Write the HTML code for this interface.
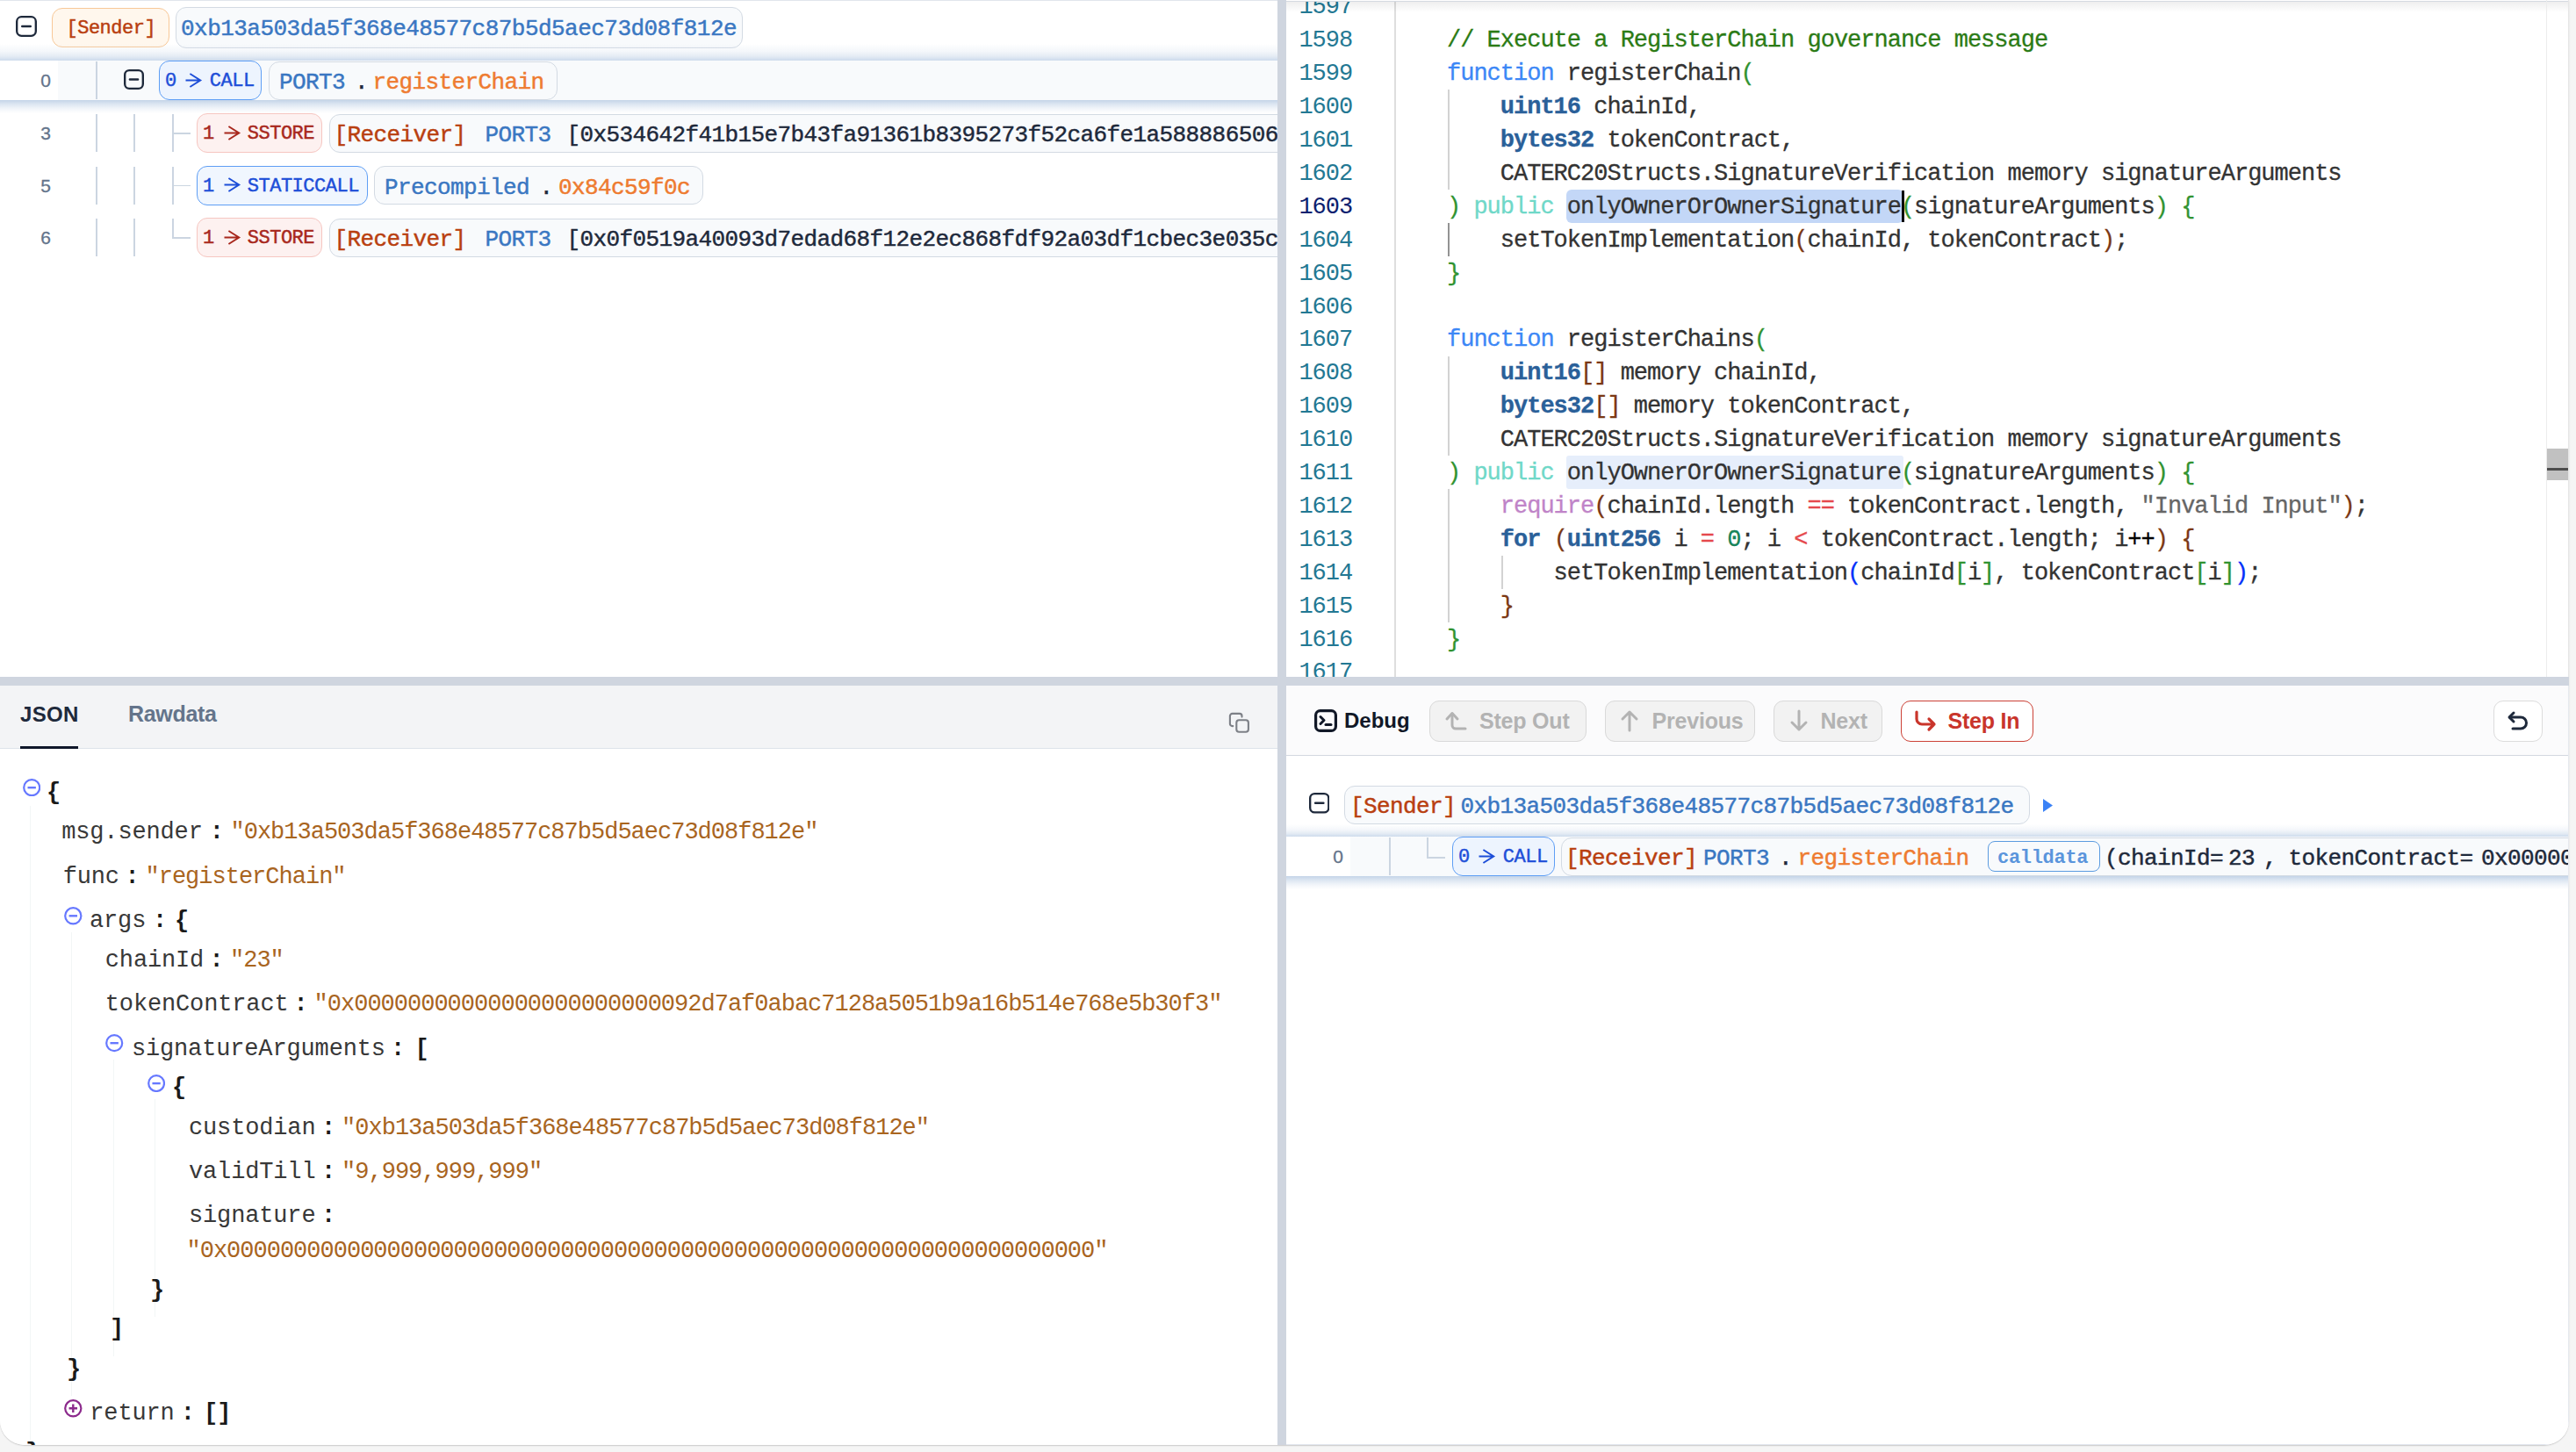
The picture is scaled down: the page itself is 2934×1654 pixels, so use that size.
<!DOCTYPE html><html><head><meta charset="utf-8"><style>
html,body{margin:0;padding:0}
body{width:2934px;height:1654px;background:#f5f5f5;position:relative;overflow:hidden}
.t{position:absolute;line-height:1;white-space:pre}
.m{font-family:"Liberation Mono",monospace}
.s{font-family:"Liberation Sans",sans-serif}
.b{position:absolute;box-sizing:border-box}
.clip{position:absolute;overflow:hidden}
</style></head><body>
<div class="clip" style="left:0;top:0;width:2926px;height:1646px;background:#fff;border-radius:0 0 28px 28px;box-shadow:0 1px 1.5px rgba(0,0,0,.18)">

<div class="clip" style="left:0;top:0;width:1455px;height:771px;background:#fff">
<div class="b" style="left:0.0px;top:0.0px;width:1455.0px;height:1.0px;background:#e1e5ec"></div>
<svg class="b" style="left:18px;top:18px" width="24" height="24" viewBox="0 0 24 24"><rect x="1.175" y="1.175" width="21.65" height="21.65" rx="5.28" fill="none" stroke="#1e293b" stroke-width="2.35"/><line x1="7.199999999999999" y1="12.0" x2="16.799999999999997" y2="12.0" stroke="#1e293b" stroke-width="2.35" stroke-linecap="round"/></svg>
<div class="b" style="left:59.0px;top:9.0px;width:134.0px;height:45.0px;background:#fff7ed;border:1.5px solid #f8c897;border-radius:12px"></div>
<div class="t m" style="left:75.5px;top:21.5px;font-size:22px;color:#b93f10;letter-spacing:-0.5px;-webkit-text-stroke:0.45px currentColor">[Sender]</div>
<div class="b" style="left:200.0px;top:8.0px;width:646.0px;height:47.0px;background:#f8fafc;border:1.5px solid #d3dae3;border-radius:12px"></div>
<div class="t m" style="left:206.0px;top:19.7px;font-size:26px;color:#3a77c2;letter-spacing:-0.53px;-webkit-text-stroke:0.45px currentColor">0xb13a503da5f368e48577c87b5d5aec73d08f812e</div>
<div class="b" style="left:0.0px;top:50.0px;width:1455.0px;height:19.0px;background:linear-gradient(to bottom,rgba(210,222,237,0) 0%,rgba(210,222,237,0.25) 45%,rgba(210,222,237,0.6) 75%,rgba(205,219,236,1) 100%)"></div>
<div class="b" style="left:66.0px;top:69.0px;width:1389.0px;height:45.0px;background:#f8fafc"></div>
<div class="t s" style="left:40.0px;top:81.2px;font-size:21px;color:#64748b;width:18px;text-align:right;-webkit-text-stroke:0.3px currentColor">0</div>
<div class="b" style="left:109.0px;top:70.0px;width:2.0px;height:43.0px;background:#cbd5e1"></div>
<svg class="b" style="left:141px;top:79px" width="23" height="23" viewBox="0 0 23 23"><rect x="1.175" y="1.175" width="20.65" height="20.65" rx="5.06" fill="none" stroke="#1e293b" stroke-width="2.35"/><line x1="6.8999999999999995" y1="11.5" x2="16.099999999999998" y2="11.5" stroke="#1e293b" stroke-width="2.35" stroke-linecap="round"/></svg>
<div class="b" style="left:181.0px;top:69.0px;width:117.0px;height:45.0px;background:#edf4fe;border:1.5px solid #5e9ef5;border-radius:12px"></div>
<div class="t m" style="left:188.0px;top:82.1px;font-size:22px;color:#1d4ed8;letter-spacing:-0.5px;-webkit-text-stroke:0.45px currentColor">0   CALL</div>
<svg class="b" style="left:211.0px;top:83.0px;overflow:visible" width="18" height="17" viewBox="0 0 18 17"><path d="M0.5 8.5 H17.2 M5.3999999999999995 1 L17.2 8.5 L5.3999999999999995 16" fill="none" stroke="#1d4ed8" stroke-width="2.0" stroke-linejoin="miter"/></svg>
<div class="b" style="left:305.5px;top:69.5px;width:329.5px;height:44.0px;background:#f8fafc;border:1.5px solid #d3dae3;border-radius:12px"></div>
<div class="t m" style="left:318.0px;top:81.1px;font-size:26px;color:#3a77c2;letter-spacing:-0.6px;-webkit-text-stroke:0.45px currentColor">PORT3</div>
<div class="t m" style="left:404.0px;top:81.1px;font-size:26px;color:#1e293b;letter-spacing:-0.6px;-webkit-text-stroke:0.45px currentColor">.</div>
<div class="t m" style="left:424.5px;top:81.1px;font-size:26px;color:#ee7b30;letter-spacing:-0.6px;-webkit-text-stroke:0.45px currentColor">registerChain</div>
<div class="b" style="left:0.0px;top:114.0px;width:1455.0px;height:15.0px;background:linear-gradient(to bottom,rgba(196,212,232,1) 0%,rgba(205,219,236,0.7) 30%,rgba(215,226,240,0.35) 65%,rgba(225,233,243,0) 100%)"></div>
<div class="t s" style="left:40.0px;top:141.2px;font-size:21px;color:#64748b;width:18px;text-align:right;-webkit-text-stroke:0.3px currentColor">3</div>
<div class="b" style="left:109.0px;top:130.0px;width:2.0px;height:43.0px;background:#cbd5e1"></div>
<div class="b" style="left:152.0px;top:130.0px;width:2.0px;height:43.0px;background:#cbd5e1"></div>
<div class="b" style="left:196.0px;top:130.0px;width:1.5px;height:43.0px;background:#cbd5e1"></div>
<div class="b" style="left:196.0px;top:151.0px;width:21.0px;height:1.5px;background:#cbd5e1"></div>
<div class="b" style="left:224.0px;top:129.0px;width:143.0px;height:45.0px;background:#fdf1f0;border:1.5px solid #f6c6c1;border-radius:12px"></div>
<div class="t m" style="left:231.0px;top:142.1px;font-size:22px;color:#a8281d;letter-spacing:-0.5px;-webkit-text-stroke:0.45px currentColor">1   SSTORE</div>
<svg class="b" style="left:254.5px;top:142.5px;overflow:visible" width="18" height="17" viewBox="0 0 18 17"><path d="M0.5 8.5 H17.2 M5.3999999999999995 1 L17.2 8.5 L5.3999999999999995 16" fill="none" stroke="#a8281d" stroke-width="2.0" stroke-linejoin="miter"/></svg>
<div class="b" style="left:375.0px;top:129.5px;width:1095.0px;height:44.0px;background:#f8fafc;border:1.5px solid #d3dae3;border-radius:12px"></div>
<div class="t m" style="left:380.5px;top:141.1px;font-size:26px;color:#b93f10;letter-spacing:-0.6px;-webkit-text-stroke:0.45px currentColor">[Receiver]</div>
<div class="t m" style="left:552.5px;top:141.1px;font-size:26px;color:#3a77c2;letter-spacing:-0.6px;-webkit-text-stroke:0.45px currentColor">PORT3</div>
<div class="t m" style="left:645.5px;top:141.1px;font-size:26px;color:#1e293b;letter-spacing:-0.6px;-webkit-text-stroke:0.45px currentColor">[0x534642f41b15e7b43fa91361b8395273f52ca6fe1a588886506e2f]</div>
<div class="t s" style="left:40.0px;top:200.7px;font-size:21px;color:#64748b;width:18px;text-align:right;-webkit-text-stroke:0.3px currentColor">5</div>
<div class="b" style="left:109.0px;top:189.5px;width:2.0px;height:43.0px;background:#cbd5e1"></div>
<div class="b" style="left:152.0px;top:189.5px;width:2.0px;height:43.0px;background:#cbd5e1"></div>
<div class="b" style="left:196.0px;top:189.5px;width:1.5px;height:43.0px;background:#cbd5e1"></div>
<div class="b" style="left:196.0px;top:210.5px;width:21.0px;height:1.5px;background:#cbd5e1"></div>
<div class="b" style="left:224.0px;top:188.5px;width:195.0px;height:45.0px;background:#f0f6fe;border:1.5px solid #5e9ef5;border-radius:12px"></div>
<div class="t m" style="left:231.0px;top:201.6px;font-size:22px;color:#1d4ed8;letter-spacing:-0.5px;-webkit-text-stroke:0.45px currentColor">1   STATICCALL</div>
<svg class="b" style="left:254.5px;top:202.0px;overflow:visible" width="18" height="17" viewBox="0 0 18 17"><path d="M0.5 8.5 H17.2 M5.3999999999999995 1 L17.2 8.5 L5.3999999999999995 16" fill="none" stroke="#1d4ed8" stroke-width="2.0" stroke-linejoin="miter"/></svg>
<div class="b" style="left:426.0px;top:189.0px;width:374.5px;height:44.0px;background:#f8fafc;border:1.5px solid #d3dae3;border-radius:12px"></div>
<div class="t m" style="left:438.0px;top:200.6px;font-size:26px;color:#3a77c2;letter-spacing:-0.6px;-webkit-text-stroke:0.45px currentColor">Precompiled</div>
<div class="t m" style="left:614.5px;top:200.6px;font-size:26px;color:#1e293b;letter-spacing:-0.6px;-webkit-text-stroke:0.45px currentColor">.</div>
<div class="t m" style="left:636.0px;top:200.6px;font-size:26px;color:#ee7b30;letter-spacing:-0.6px;-webkit-text-stroke:0.45px currentColor">0x84c59f0c</div>
<div class="t s" style="left:40.0px;top:260.2px;font-size:21px;color:#64748b;width:18px;text-align:right;-webkit-text-stroke:0.3px currentColor">6</div>
<div class="b" style="left:109.0px;top:249.0px;width:2.0px;height:43.0px;background:#cbd5e1"></div>
<div class="b" style="left:152.0px;top:249.0px;width:2.0px;height:43.0px;background:#cbd5e1"></div>
<div class="b" style="left:196.0px;top:249.0px;width:1.5px;height:22.0px;background:#cbd5e1"></div>
<div class="b" style="left:196.0px;top:270.0px;width:21.0px;height:1.5px;background:#cbd5e1"></div>
<div class="b" style="left:224.0px;top:248.0px;width:143.0px;height:45.0px;background:#fdf1f0;border:1.5px solid #f6c6c1;border-radius:12px"></div>
<div class="t m" style="left:231.0px;top:261.1px;font-size:22px;color:#a8281d;letter-spacing:-0.5px;-webkit-text-stroke:0.45px currentColor">1   SSTORE</div>
<svg class="b" style="left:254.5px;top:261.5px;overflow:visible" width="18" height="17" viewBox="0 0 18 17"><path d="M0.5 8.5 H17.2 M5.3999999999999995 1 L17.2 8.5 L5.3999999999999995 16" fill="none" stroke="#a8281d" stroke-width="2.0" stroke-linejoin="miter"/></svg>
<div class="b" style="left:375.0px;top:248.5px;width:1095.0px;height:44.0px;background:#f8fafc;border:1.5px solid #d3dae3;border-radius:12px"></div>
<div class="t m" style="left:380.5px;top:260.1px;font-size:26px;color:#b93f10;letter-spacing:-0.6px;-webkit-text-stroke:0.45px currentColor">[Receiver]</div>
<div class="t m" style="left:552.5px;top:260.1px;font-size:26px;color:#3a77c2;letter-spacing:-0.6px;-webkit-text-stroke:0.45px currentColor">PORT3</div>
<div class="t m" style="left:645.5px;top:260.1px;font-size:26px;color:#1e293b;letter-spacing:-0.6px;-webkit-text-stroke:0.45px currentColor">[0x0f0519a40093d7edad68f12e2ec868fdf92a03df1cbec3e035cd1e]</div>
</div>
<div class="clip" style="left:1465px;top:0;width:1461px;height:771px;background:#fff">
<div class="b" style="left:123.2px;top:0.0px;width:1.8px;height:771.0px;background:#dedede"></div>
<div class="b" style="left:319.3px;top:216.0px;width:383.5px;height:37.9px;background:#c3d7f7;border-radius:6px"></div>
<div class="b" style="left:701.3px;top:217.0px;width:2.5px;height:35.9px;background:#000"></div>
<div class="b" style="left:319.3px;top:519.2px;width:383.5px;height:37.9px;background:#e6eefb;border-radius:3px"></div>
<div class="b" style="left:184.4px;top:102.3px;width:1.8px;height:113.7px;background:#d3d3d3"></div>
<div class="b" style="left:184.4px;top:253.9px;width:1.8px;height:37.9px;background:#939393"></div>
<div class="b" style="left:184.4px;top:405.5px;width:1.8px;height:113.7px;background:#d3d3d3"></div>
<div class="b" style="left:184.4px;top:557.1px;width:1.8px;height:151.6px;background:#d3d3d3"></div>
<div class="b" style="left:245.2px;top:632.9px;width:1.8px;height:37.9px;background:#d3d3d3"></div>
<div class="t m" style="left:13.2px;top:-4.6px;font-size:27px;color:#237893;letter-spacing:-1.0px;width:62px;text-align:right">1597</div>
<div class="t m" style="left:13.2px;top:33.3px;font-size:27px;color:#237893;letter-spacing:-1.0px;width:62px;text-align:right">1598</div>
<div class="t m" style="left:122.2px;top:33.3px;font-size:27px;color:#333333;letter-spacing:-1.0px;-webkit-text-stroke:0.3px currentColor">    <span style="color:#2b7b15;">// Execute a RegisterChain governance message</span></div>
<div class="t m" style="left:13.2px;top:71.2px;font-size:27px;color:#237893;letter-spacing:-1.0px;width:62px;text-align:right">1599</div>
<div class="t m" style="left:122.2px;top:71.2px;font-size:27px;color:#333333;letter-spacing:-1.0px;-webkit-text-stroke:0.3px currentColor">    <span style="color:#3c87f6;">function</span> registerChain<span style="color:#319331;">(</span></div>
<div class="t m" style="left:13.2px;top:109.1px;font-size:27px;color:#237893;letter-spacing:-1.0px;width:62px;text-align:right">1600</div>
<div class="t m" style="left:122.2px;top:109.1px;font-size:27px;color:#333333;letter-spacing:-1.0px;-webkit-text-stroke:0.3px currentColor">        <span style="color:#2a6099;font-weight:700;">uint16</span> chainId,</div>
<div class="t m" style="left:13.2px;top:147.0px;font-size:27px;color:#237893;letter-spacing:-1.0px;width:62px;text-align:right">1601</div>
<div class="t m" style="left:122.2px;top:147.0px;font-size:27px;color:#333333;letter-spacing:-1.0px;-webkit-text-stroke:0.3px currentColor">        <span style="color:#2a6099;font-weight:700;">bytes32</span> tokenContract,</div>
<div class="t m" style="left:13.2px;top:184.9px;font-size:27px;color:#237893;letter-spacing:-1.0px;width:62px;text-align:right">1602</div>
<div class="t m" style="left:122.2px;top:184.9px;font-size:27px;color:#333333;letter-spacing:-1.0px;-webkit-text-stroke:0.3px currentColor">        CATERC20Structs.SignatureVerification memory signatureArguments</div>
<div class="t m" style="left:13.2px;top:222.8px;font-size:27px;color:#0b216f;letter-spacing:-1.0px;width:62px;text-align:right">1603</div>
<div class="t m" style="left:122.2px;top:222.8px;font-size:27px;color:#333333;letter-spacing:-1.0px;-webkit-text-stroke:0.3px currentColor">    <span style="color:#319331;">)</span> <span style="color:#6fd8c8;">public</span> onlyOwnerOrOwnerSignature<span style="color:#319331;">(</span>signatureArguments<span style="color:#319331;">)</span> <span style="color:#319331;">{</span></div>
<div class="t m" style="left:13.2px;top:260.7px;font-size:27px;color:#237893;letter-spacing:-1.0px;width:62px;text-align:right">1604</div>
<div class="t m" style="left:122.2px;top:260.7px;font-size:27px;color:#333333;letter-spacing:-1.0px;-webkit-text-stroke:0.3px currentColor">        setTokenImplementation<span style="color:#7b3814;">(</span>chainId, tokenContract<span style="color:#7b3814;">)</span>;</div>
<div class="t m" style="left:13.2px;top:298.6px;font-size:27px;color:#237893;letter-spacing:-1.0px;width:62px;text-align:right">1605</div>
<div class="t m" style="left:122.2px;top:298.6px;font-size:27px;color:#333333;letter-spacing:-1.0px;-webkit-text-stroke:0.3px currentColor">    <span style="color:#319331;">}</span></div>
<div class="t m" style="left:13.2px;top:336.5px;font-size:27px;color:#237893;letter-spacing:-1.0px;width:62px;text-align:right">1606</div>
<div class="t m" style="left:13.2px;top:374.4px;font-size:27px;color:#237893;letter-spacing:-1.0px;width:62px;text-align:right">1607</div>
<div class="t m" style="left:122.2px;top:374.4px;font-size:27px;color:#333333;letter-spacing:-1.0px;-webkit-text-stroke:0.3px currentColor">    <span style="color:#3c87f6;">function</span> registerChains<span style="color:#319331;">(</span></div>
<div class="t m" style="left:13.2px;top:412.3px;font-size:27px;color:#237893;letter-spacing:-1.0px;width:62px;text-align:right">1608</div>
<div class="t m" style="left:122.2px;top:412.3px;font-size:27px;color:#333333;letter-spacing:-1.0px;-webkit-text-stroke:0.3px currentColor">        <span style="color:#2a6099;font-weight:700;">uint16</span><span style="color:#7b3814;">[]</span> memory chainId,</div>
<div class="t m" style="left:13.2px;top:450.2px;font-size:27px;color:#237893;letter-spacing:-1.0px;width:62px;text-align:right">1609</div>
<div class="t m" style="left:122.2px;top:450.2px;font-size:27px;color:#333333;letter-spacing:-1.0px;-webkit-text-stroke:0.3px currentColor">        <span style="color:#2a6099;font-weight:700;">bytes32</span><span style="color:#7b3814;">[]</span> memory tokenContract,</div>
<div class="t m" style="left:13.2px;top:488.1px;font-size:27px;color:#237893;letter-spacing:-1.0px;width:62px;text-align:right">1610</div>
<div class="t m" style="left:122.2px;top:488.1px;font-size:27px;color:#333333;letter-spacing:-1.0px;-webkit-text-stroke:0.3px currentColor">        CATERC20Structs.SignatureVerification memory signatureArguments</div>
<div class="t m" style="left:13.2px;top:526.0px;font-size:27px;color:#237893;letter-spacing:-1.0px;width:62px;text-align:right">1611</div>
<div class="t m" style="left:122.2px;top:526.0px;font-size:27px;color:#333333;letter-spacing:-1.0px;-webkit-text-stroke:0.3px currentColor">    <span style="color:#319331;">)</span> <span style="color:#6fd8c8;">public</span> onlyOwnerOrOwnerSignature<span style="color:#319331;">(</span>signatureArguments<span style="color:#319331;">)</span> <span style="color:#319331;">{</span></div>
<div class="t m" style="left:13.2px;top:563.9px;font-size:27px;color:#237893;letter-spacing:-1.0px;width:62px;text-align:right">1612</div>
<div class="t m" style="left:122.2px;top:563.9px;font-size:27px;color:#333333;letter-spacing:-1.0px;-webkit-text-stroke:0.3px currentColor">        <span style="color:#c084c8;">require</span><span style="color:#7b3814;">(</span>chainId.length <span style="color:#e5484d;">==</span> tokenContract.length, <span style="color:#666666;">"Invalid Input"</span><span style="color:#7b3814;">)</span>;</div>
<div class="t m" style="left:13.2px;top:601.8px;font-size:27px;color:#237893;letter-spacing:-1.0px;width:62px;text-align:right">1613</div>
<div class="t m" style="left:122.2px;top:601.8px;font-size:27px;color:#333333;letter-spacing:-1.0px;-webkit-text-stroke:0.3px currentColor">        <span style="color:#2a6099;font-weight:700;">for</span> <span style="color:#7b3814;">(</span><span style="color:#2a6099;font-weight:700;">uint256</span> i <span style="color:#e5484d;">=</span> <span style="color:#17845a;">0</span>; i <span style="color:#e5484d;">&lt;</span> tokenContract.length; i<span style="color:#000000;">++</span><span style="color:#7b3814;">)</span> <span style="color:#7b3814;">{</span></div>
<div class="t m" style="left:13.2px;top:639.7px;font-size:27px;color:#237893;letter-spacing:-1.0px;width:62px;text-align:right">1614</div>
<div class="t m" style="left:122.2px;top:639.7px;font-size:27px;color:#333333;letter-spacing:-1.0px;-webkit-text-stroke:0.3px currentColor">            setTokenImplementation<span style="color:#0431fa;">(</span>chainId<span style="color:#319331;">[</span>i<span style="color:#319331;">]</span>, tokenContract<span style="color:#319331;">[</span>i<span style="color:#319331;">]</span><span style="color:#0431fa;">)</span>;</div>
<div class="t m" style="left:13.2px;top:677.6px;font-size:27px;color:#237893;letter-spacing:-1.0px;width:62px;text-align:right">1615</div>
<div class="t m" style="left:122.2px;top:677.6px;font-size:27px;color:#333333;letter-spacing:-1.0px;-webkit-text-stroke:0.3px currentColor">        <span style="color:#7b3814;">}</span></div>
<div class="t m" style="left:13.2px;top:715.5px;font-size:27px;color:#237893;letter-spacing:-1.0px;width:62px;text-align:right">1616</div>
<div class="t m" style="left:122.2px;top:715.5px;font-size:27px;color:#333333;letter-spacing:-1.0px;-webkit-text-stroke:0.3px currentColor">    <span style="color:#319331;">}</span></div>
<div class="t m" style="left:13.2px;top:753.4px;font-size:27px;color:#237893;letter-spacing:-1.0px;width:62px;text-align:right">1617</div>
<div class="b" style="left:0.0px;top:0.0px;width:1461.0px;height:1.0px;background:#ffffff"></div>
<div class="b" style="left:0.0px;top:1.0px;width:1461.0px;height:1.0px;background:#d4d9e1"></div>
<div class="b" style="left:0.0px;top:2.0px;width:1461.0px;height:12.0px;background:linear-gradient(to bottom,rgba(0,0,0,.065),rgba(0,0,0,0))"></div>
<div class="b" style="left:1435.0px;top:0.0px;width:1.0px;height:771.0px;background:#ececec"></div>
<div class="b" style="left:1435.5px;top:511.0px;width:24.5px;height:35.7px;background:#c1c1c1"></div>
<div class="b" style="left:1436.0px;top:533.0px;width:24.0px;height:3.0px;background:#4d4d4d"></div>
<div class="b" style="left:1460.0px;top:0.0px;width:1.0px;height:771.0px;background:#e6e6e6"></div>
</div>
<div class="b" style="left:0.0px;top:771.0px;width:2926.0px;height:10.0px;background:#cfd5df"></div>
<div class="b" style="left:1455.0px;top:0.0px;width:10.0px;height:1646.0px;background:#cfd5df"></div>
<div class="clip" style="left:0;top:781px;width:1455px;height:865px;background:#fff">
<div class="b" style="left:0.0px;top:0.0px;width:1455.0px;height:71.0px;background:#f3f4f6"></div>
<div class="b" style="left:0.0px;top:71.0px;width:1455.0px;height:1.0px;background:#dde3ea"></div>
<div class="t s" style="left:23.0px;top:21.1px;font-size:24px;color:#1e293b;font-weight:700;letter-spacing:0.3px">JSON</div>
<div class="t s" style="left:146.0px;top:20.2px;font-size:25px;color:#64748b;font-weight:700;letter-spacing:-0.3px">Rawdata</div>
<div class="b" style="left:23.0px;top:69.0px;width:66.0px;height:3.0px;background:#0f172a"></div>
<svg class="b" style="left:1398px;top:29px" width="27" height="27" viewBox="0 0 27 27"><rect x="10.3" y="10.2" width="13.6" height="13.6" rx="3" fill="none" stroke="#7d8087" stroke-width="2.1"/><path d="M6.3 17.1 H5.6 A2.7 2.7 0 0 1 2.9 14.4 V5.6 A2.7 2.7 0 0 1 5.6 2.9 H13.8 A2.7 2.7 0 0 1 16.5 5.6 V6.6" fill="none" stroke="#7d8087" stroke-width="2.1" stroke-linecap="round"/></svg>
<div class="b" style="left:34.0px;top:137.0px;width:1.2px;height:722.0px;background:#f2f6f6"></div>
<div class="b" style="left:81.0px;top:281.0px;width:1.2px;height:528.0px;background:#f2f6f6"></div>
<div class="b" style="left:128.5px;top:426.0px;width:1.2px;height:338.0px;background:#f2f6f6"></div>
<div class="b" style="left:175.5px;top:471.0px;width:1.2px;height:248.0px;background:#f2f6f6"></div>
<svg class="b" style="left:25.6px;top:106px" width="20.4" height="20.4" viewBox="0 0 20.4 20.4"><circle cx="10.2" cy="10.2" r="9.0" fill="none" stroke="#6678ff" stroke-width="2.2"/><line x1="5.508" y1="10.2" x2="14.892" y2="10.2" stroke="#6678ff" stroke-width="2.4"/></svg>
<div class="t m" style="left:53.0px;top:109.3px;font-size:27px;color:#1a1a1a;font-weight:700;letter-spacing:-1.0px">{</div>
<div class="t m" style="left:70.2px;top:154.3px;font-size:27px;color:#383838;letter-spacing:-0.15px">msg.sender</div>
<div class="t m" style="left:238.8px;top:154.3px;font-size:27px;color:#1a1a1a;font-weight:700;letter-spacing:-1.0px">:</div>
<div class="t m" style="left:262.5px;top:154.3px;font-size:27px;color:#a9651f;letter-spacing:-1.0px">"0xb13a503da5f368e48577c87b5d5aec73d08f812e"</div>
<div class="t m" style="left:71.7px;top:205.2px;font-size:27px;color:#383838;letter-spacing:-0.15px">func</div>
<div class="t m" style="left:142.5px;top:205.2px;font-size:27px;color:#1a1a1a;font-weight:700;letter-spacing:-1.0px">:</div>
<div class="t m" style="left:165.5px;top:205.2px;font-size:27px;color:#a9651f;letter-spacing:-1.0px">"registerChain"</div>
<svg class="b" style="left:73.3px;top:252.4000000000001px" width="20.6" height="20.6" viewBox="0 0 20.6 20.6"><circle cx="10.3" cy="10.3" r="9.100000000000001" fill="none" stroke="#6678ff" stroke-width="2.2"/><line x1="5.562000000000001" y1="10.3" x2="15.038" y2="10.3" stroke="#6678ff" stroke-width="2.4"/></svg>
<div class="t m" style="left:102.0px;top:254.9px;font-size:27px;color:#383838;letter-spacing:-0.15px">args</div>
<div class="t m" style="left:173.9px;top:254.9px;font-size:27px;color:#1a1a1a;font-weight:700;letter-spacing:-1.0px">:</div>
<div class="t m" style="left:199.0px;top:254.9px;font-size:27px;color:#1a1a1a;font-weight:700;letter-spacing:-1.0px">{</div>
<div class="t m" style="left:119.8px;top:300.1px;font-size:27px;color:#383838;letter-spacing:-0.15px">chainId</div>
<div class="t m" style="left:238.5px;top:300.1px;font-size:27px;color:#1a1a1a;font-weight:700;letter-spacing:-1.0px">:</div>
<div class="t m" style="left:262.0px;top:300.1px;font-size:27px;color:#a9651f;letter-spacing:-1.0px">"23"</div>
<div class="t m" style="left:119.8px;top:349.6px;font-size:27px;color:#383838;letter-spacing:-0.15px">tokenContract</div>
<div class="t m" style="left:334.5px;top:349.6px;font-size:27px;color:#1a1a1a;font-weight:700;letter-spacing:-1.0px">:</div>
<div class="t m" style="left:357.6px;top:349.6px;font-size:27px;color:#a9651f;letter-spacing:-1.0px">"0x00000000000000000000000092d7af0abac7128a5051b9a16b514e768e5b30f3"</div>
<svg class="b" style="left:120.3px;top:397.4000000000001px" width="20.4" height="20.4" viewBox="0 0 20.4 20.4"><circle cx="10.2" cy="10.2" r="9.0" fill="none" stroke="#6678ff" stroke-width="2.2"/><line x1="5.508" y1="10.2" x2="14.892" y2="10.2" stroke="#6678ff" stroke-width="2.4"/></svg>
<div class="t m" style="left:149.9px;top:401.0px;font-size:27px;color:#383838;letter-spacing:-0.15px">signatureArguments</div>
<div class="t m" style="left:445.1px;top:401.0px;font-size:27px;color:#1a1a1a;font-weight:700;letter-spacing:-1.0px">:</div>
<div class="t m" style="left:472.5px;top:401.0px;font-size:27px;color:#1a1a1a;font-weight:700;letter-spacing:-1.0px">[</div>
<svg class="b" style="left:167.9px;top:442.5999999999999px" width="20.2" height="20.2" viewBox="0 0 20.2 20.2"><circle cx="10.1" cy="10.1" r="8.9" fill="none" stroke="#6678ff" stroke-width="2.2"/><line x1="5.454" y1="10.1" x2="14.745999999999999" y2="10.1" stroke="#6678ff" stroke-width="2.4"/></svg>
<div class="t m" style="left:196.0px;top:445.3px;font-size:27px;color:#1a1a1a;font-weight:700;letter-spacing:-1.0px">{</div>
<div class="t m" style="left:215.0px;top:491.0px;font-size:27px;color:#383838;letter-spacing:-0.15px">custodian</div>
<div class="t m" style="left:366.1px;top:491.0px;font-size:27px;color:#1a1a1a;font-weight:700;letter-spacing:-1.0px">:</div>
<div class="t m" style="left:389.1px;top:491.0px;font-size:27px;color:#a9651f;letter-spacing:-1.0px">"0xb13a503da5f368e48577c87b5d5aec73d08f812e"</div>
<div class="t m" style="left:215.0px;top:540.9px;font-size:27px;color:#383838;letter-spacing:-0.15px">validTill</div>
<div class="t m" style="left:366.1px;top:540.9px;font-size:27px;color:#1a1a1a;font-weight:700;letter-spacing:-1.0px">:</div>
<div class="t m" style="left:389.1px;top:540.9px;font-size:27px;color:#a9651f;letter-spacing:-1.0px">"9,999,999,999"</div>
<div class="t m" style="left:215.0px;top:591.0px;font-size:27px;color:#383838;letter-spacing:-0.15px">signature</div>
<div class="t m" style="left:366.1px;top:591.0px;font-size:27px;color:#1a1a1a;font-weight:700;letter-spacing:-1.0px">:</div>
<div class="t m" style="left:212.5px;top:630.8px;font-size:27px;color:#a9651f;letter-spacing:-1.0px">"0x00000000000000000000000000000000000000000000000000000000000000000"</div>
<div class="t m" style="left:171.0px;top:676.1px;font-size:27px;color:#1a1a1a;font-weight:700;letter-spacing:-1.0px">}</div>
<div class="t m" style="left:125.0px;top:720.3px;font-size:27px;color:#1a1a1a;font-weight:700;letter-spacing:-1.0px">]</div>
<div class="t m" style="left:76.0px;top:766.3px;font-size:27px;color:#1a1a1a;font-weight:700;letter-spacing:-1.0px">}</div>
<svg class="b" style="left:73.4px;top:813.3px" width="20.6" height="20.6" viewBox="0 0 20.6 20.6"><circle cx="10.3" cy="10.3" r="9.100000000000001" fill="none" stroke="#8c2a8c" stroke-width="2.2"/><line x1="5.562000000000001" y1="10.3" x2="15.038" y2="10.3" stroke="#8c2a8c" stroke-width="2.4"/><line x1="10.3" y1="5.562000000000001" x2="10.3" y2="15.038" stroke="#8c2a8c" stroke-width="2.4"/></svg>
<div class="t m" style="left:102.3px;top:815.9px;font-size:27px;color:#383838;letter-spacing:-0.15px">return</div>
<div class="t m" style="left:205.7px;top:815.9px;font-size:27px;color:#1a1a1a;font-weight:700;letter-spacing:-1.0px">:</div>
<div class="t m" style="left:232.0px;top:815.9px;font-size:27px;color:#1a1a1a;font-weight:700;letter-spacing:-1.0px">[]</div>
<div class="t m" style="left:29.0px;top:861.3px;font-size:27px;color:#1a1a1a;font-weight:700;letter-spacing:-1.0px">}</div>
</div>
<div class="clip" style="left:1465px;top:781px;width:1461px;height:865px;background:#fff">
<div class="b" style="left:0.0px;top:0.0px;width:1461.0px;height:79.0px;background:#fbfbfc"></div>
<div class="b" style="left:0.0px;top:79.0px;width:1461.0px;height:1.0px;background:#d3d8e0"></div>
<svg class="b" style="left:32px;top:26.5px" width="26" height="26" viewBox="0 0 26 26"><rect x="1.6" y="1.6" width="22.8" height="22.8" rx="5" fill="none" stroke="#111827" stroke-width="3.2"/><path d="M7 8.5 L11 12.5 L7 16.5" fill="none" stroke="#111827" stroke-width="3" stroke-linecap="round" stroke-linejoin="round"/><line x1="13" y1="17.5" x2="19" y2="17.5" stroke="#111827" stroke-width="3" stroke-linecap="round"/></svg>
<div class="t s" style="left:66.0px;top:28.3px;font-size:24px;color:#111827;font-weight:700">Debug</div>
<div class="b" style="left:163.4px;top:16.5px;width:178.2px;height:47.3px;background:#f2f2f2;border:1.5px solid #d9d9d9;border-radius:11px"></div>
<div class="t s" style="left:220.0px;top:27.6px;font-size:25px;color:#b3b3b3;font-weight:700;letter-spacing:-0.2px">Step Out</div>
<svg class="b" style="left:180px;top:28px" width="27" height="25" viewBox="0 0 27 25"><path d="M24 21 H13 A4 4 0 0 1 9 17 V4" fill="none" stroke="#b3b3b3" stroke-width="3" stroke-linecap="round"/><path d="M3 10 L9 3.5 L15 10" fill="none" stroke="#b3b3b3" stroke-width="3" stroke-linecap="round" stroke-linejoin="round"/></svg>
<div class="b" style="left:363.3px;top:16.5px;width:170.4px;height:47.3px;background:#f2f2f2;border:1.5px solid #d9d9d9;border-radius:11px"></div>
<div class="t s" style="left:416.5px;top:27.6px;font-size:25px;color:#b3b3b3;font-weight:700;letter-spacing:-0.2px">Previous</div>
<svg class="b" style="left:380px;top:27px" width="22" height="26" viewBox="0 0 22 26"><path d="M11 24 V3 M3 11 L11 3 L19 11" fill="none" stroke="#b3b3b3" stroke-width="3" stroke-linecap="round" stroke-linejoin="round"/></svg>
<div class="b" style="left:555.1px;top:16.5px;width:123.7px;height:47.3px;background:#f2f2f2;border:1.5px solid #d9d9d9;border-radius:11px"></div>
<div class="t s" style="left:608.5px;top:27.6px;font-size:25px;color:#b3b3b3;font-weight:700;letter-spacing:-0.2px">Next</div>
<svg class="b" style="left:572.5px;top:27px" width="22" height="26" viewBox="0 0 22 26"><path d="M11 2 V23 M3 15 L11 23 L19 15" fill="none" stroke="#b3b3b3" stroke-width="3" stroke-linecap="round" stroke-linejoin="round"/></svg>
<div class="b" style="left:700.2px;top:16.5px;width:150.9px;height:47.3px;background:#ffffff;border:1.6px solid #cc4136;border-radius:11px"></div>
<div class="t s" style="left:753.5px;top:27.6px;font-size:25px;color:#c9352b;font-weight:700;letter-spacing:-0.2px">Step In</div>
<svg class="b" style="left:714px;top:27px" width="28" height="26" viewBox="0 0 28 26"><path d="M4 3 V11 A6 6 0 0 0 10 17 H24 M18 11 L24 17 L18 23" fill="none" stroke="#c9352b" stroke-width="3.2" stroke-linecap="round" stroke-linejoin="round"/></svg>
<div class="b" style="left:1375.0px;top:16.5px;width:56.0px;height:47.5px;background:#ffffff;border:1.5px solid #dcdcdc;border-radius:11px"></div>
<svg class="b" style="left:1390px;top:27.5px" width="26" height="25" viewBox="0 0 26 25"><path d="M8 3 L3 8 L8 13" fill="none" stroke="#1e293b" stroke-width="3" stroke-linecap="round" stroke-linejoin="round"/><path d="M3.5 8 H16 A6.5 6.5 0 0 1 16 21 H7" fill="none" stroke="#1e293b" stroke-width="3" stroke-linecap="round"/></svg>
<div style="position:absolute;left:0;top:0"><svg class="b" style="left:25.5px;top:122.29999999999995px" width="23.5" height="23.5" viewBox="0 0 23.5 23.5"><rect x="1.175" y="1.175" width="21.15" height="21.15" rx="5.17" fill="none" stroke="#1e293b" stroke-width="2.35"/><line x1="7.05" y1="11.75" x2="16.45" y2="11.75" stroke="#1e293b" stroke-width="2.35" stroke-linecap="round"/></svg></div>
<div class="b" style="left:66.2px;top:114.2px;width:781.1px;height:43.5px;background:#f8fafc;border:1.5px solid #d3dae3;border-radius:12px"></div>
<div class="t m" style="left:73.0px;top:125.4px;font-size:26px;color:#b93f10;letter-spacing:-0.6px;-webkit-text-stroke:0.45px currentColor">[Sender]</div>
<div class="t m" style="left:198.5px;top:125.4px;font-size:26px;color:#3a77c2;letter-spacing:-0.6px;-webkit-text-stroke:0.45px currentColor">0xb13a503da5f368e48577c87b5d5aec73d08f812e</div>
<svg class="b" style="left:861px;top:128px" width="13" height="17" viewBox="0 0 13 17"><path d="M1 1 L12 8.5 L1 16 Z" fill="#3b82f6"/></svg>
<div class="b" style="left:0.0px;top:157.5px;width:1461.0px;height:14.5px;background:linear-gradient(to bottom,rgba(210,222,237,0) 0%,rgba(210,222,237,0.25) 45%,rgba(210,222,237,0.6) 75%,rgba(205,219,236,1) 100%)"></div>
<div class="b" style="left:73.0px;top:172.0px;width:1388.0px;height:45.0px;background:#f8fafc"></div>
<div class="t s" style="left:47.0px;top:184.2px;font-size:21px;color:#64748b;width:18px;text-align:right;-webkit-text-stroke:0.3px currentColor">0</div>
<div class="b" style="left:117.0px;top:173.0px;width:1.5px;height:43.0px;background:#cbd5e1"></div>
<div class="b" style="left:160.0px;top:173.0px;width:1.5px;height:23.5px;background:#cbd5e1"></div>
<div class="b" style="left:160.0px;top:195.0px;width:21.0px;height:1.5px;background:#cbd5e1"></div>
<div class="b" style="left:189.2px;top:172.0px;width:116.5px;height:45.0px;background:#edf4fe;border:1.5px solid #5e9ef5;border-radius:12px"></div>
<div class="t m" style="left:196.0px;top:185.1px;font-size:22px;color:#1d4ed8;letter-spacing:-0.5px;-webkit-text-stroke:0.45px currentColor">0   CALL</div>
<svg class="b" style="left:219.0px;top:186.0px;overflow:visible" width="18" height="17" viewBox="0 0 18 17"><path d="M0.5 8.5 H17.2 M5.3999999999999995 1 L17.2 8.5 L5.3999999999999995 16" fill="none" stroke="#1d4ed8" stroke-width="2.0" stroke-linejoin="miter"/></svg>
<div class="b" style="left:313.1px;top:172.5px;width:1161.9px;height:44.0px;background:#f8fafc;border:1.5px solid #d3dae3;border-radius:12px"></div>
<div class="t m" style="left:318.0px;top:183.6px;font-size:26px;color:#b93f10;letter-spacing:-0.6px;-webkit-text-stroke:0.45px currentColor">[Receiver]</div>
<div class="t m" style="left:475.0px;top:183.6px;font-size:26px;color:#3a77c2;letter-spacing:-0.6px;-webkit-text-stroke:0.45px currentColor">PORT3</div>
<div class="t m" style="left:561.0px;top:183.6px;font-size:26px;color:#1e293b;letter-spacing:-0.6px;-webkit-text-stroke:0.45px currentColor">.</div>
<div class="t m" style="left:582.5px;top:183.6px;font-size:26px;color:#ee7b30;letter-spacing:-0.6px;-webkit-text-stroke:0.45px currentColor">registerChain</div>
<div class="b" style="left:799.0px;top:177.2px;width:128.0px;height:34.6px;background:#f8fafc;border:1.5px solid #5b9be0;border-radius:8px"></div>
<div class="t m" style="left:810.0px;top:185.6px;font-size:22px;color:#5a95dc;font-weight:700;letter-spacing:-0.3px">calldata</div>
<div class="t m" style="left:932.0px;top:183.6px;font-size:26px;color:#1e293b;letter-spacing:-0.6px;-webkit-text-stroke:0.45px currentColor">(chainId=</div>
<div class="t m" style="left:1073.0px;top:183.6px;font-size:26px;color:#1e293b;letter-spacing:-0.6px;-webkit-text-stroke:0.45px currentColor">23</div>
<div class="t m" style="left:1113.0px;top:183.6px;font-size:26px;color:#1e293b;letter-spacing:-0.6px;-webkit-text-stroke:0.45px currentColor">,</div>
<div class="t m" style="left:1141.5px;top:183.6px;font-size:26px;color:#1e293b;letter-spacing:-0.6px;-webkit-text-stroke:0.45px currentColor">tokenContract=</div>
<div class="t m" style="left:1361.0px;top:183.6px;font-size:26px;color:#1e293b;letter-spacing:-0.6px;-webkit-text-stroke:0.45px currentColor">0x00000000000000000000</div>
<div class="b" style="left:0.0px;top:217.0px;width:1461.0px;height:15.0px;background:linear-gradient(to bottom,rgba(196,212,232,1) 0%,rgba(205,219,236,0.7) 30%,rgba(215,226,240,0.35) 65%,rgba(225,233,243,0) 100%)"></div>
<div class="b" style="left:1460.0px;top:0.0px;width:1.0px;height:865.0px;background:#e6e9ee"></div>
<div class="b" style="left:0.0px;top:864.0px;width:1461.0px;height:1.0px;background:#e3e7ef"></div>
</div>
</div></body></html>
